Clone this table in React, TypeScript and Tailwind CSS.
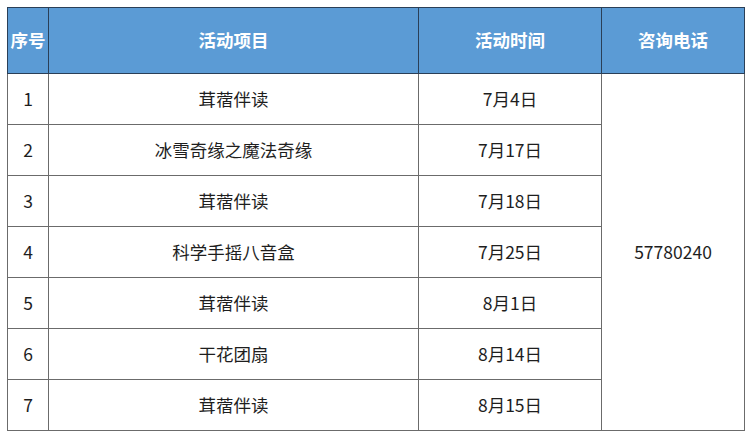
const rows = [
  { no: "1", name: "茸蓿伴读", date: "7月4日" },
  { no: "2", name: "冰雪奇缘之魔法奇缘", date: "7月17日" },
  { no: "3", name: "茸蓿伴读", date: "7月18日" },
  { no: "4", name: "科学手摇八音盒", date: "7月25日" },
  { no: "5", name: "茸蓿伴读", date: "8月1日" },
  { no: "6", name: "干花团扇", date: "8月14日" },
  { no: "7", name: "茸蓿伴读", date: "8月15日" },
];

export default function App() {
  return (
    <div
      className="w-[750px] h-[437px] bg-white pt-[7px] pl-[7px]"
      style={{ fontFamily: '"Noto Sans CJK SC", "Noto Sans", sans-serif' }}
    >
      <table className="w-[737px] border-collapse table-fixed text-[17.5px] text-[#1e1e1e]">
        <colgroup>
          <col className="w-[41px]" />
          <col className="w-[370px]" />
          <col className="w-[183px]" />
          <col className="w-[143px]" />
        </colgroup>
        <thead>
          <tr className="h-[66px] bg-[#5b9bd5] text-white font-bold">
            <th className="border border-[#2a3f57] p-0">序号</th>
            <th className="border border-[#2a3f57] p-0">活动项目</th>
            <th className="border border-[#2a3f57] p-0">活动时间</th>
            <th className="border border-[#2a3f57] p-0">咨询电话</th>
          </tr>
        </thead>
        <tbody>
          {rows.map((r, i) => (
            <tr key={r.no} className="h-[51px]">
              <td className="border border-[#6b6b6b] text-center p-0">{r.no}</td>
              <td className="border border-[#6b6b6b] text-center p-0">{r.name}</td>
              <td className="border border-[#6b6b6b] text-center p-0">{r.date}</td>
              {i === 0 && (
                <td rowSpan={7} className="border border-[#6b6b6b] text-center p-0">
                  57780240
                </td>
              )}
            </tr>
          ))}
        </tbody>
      </table>
    </div>
  );
}
